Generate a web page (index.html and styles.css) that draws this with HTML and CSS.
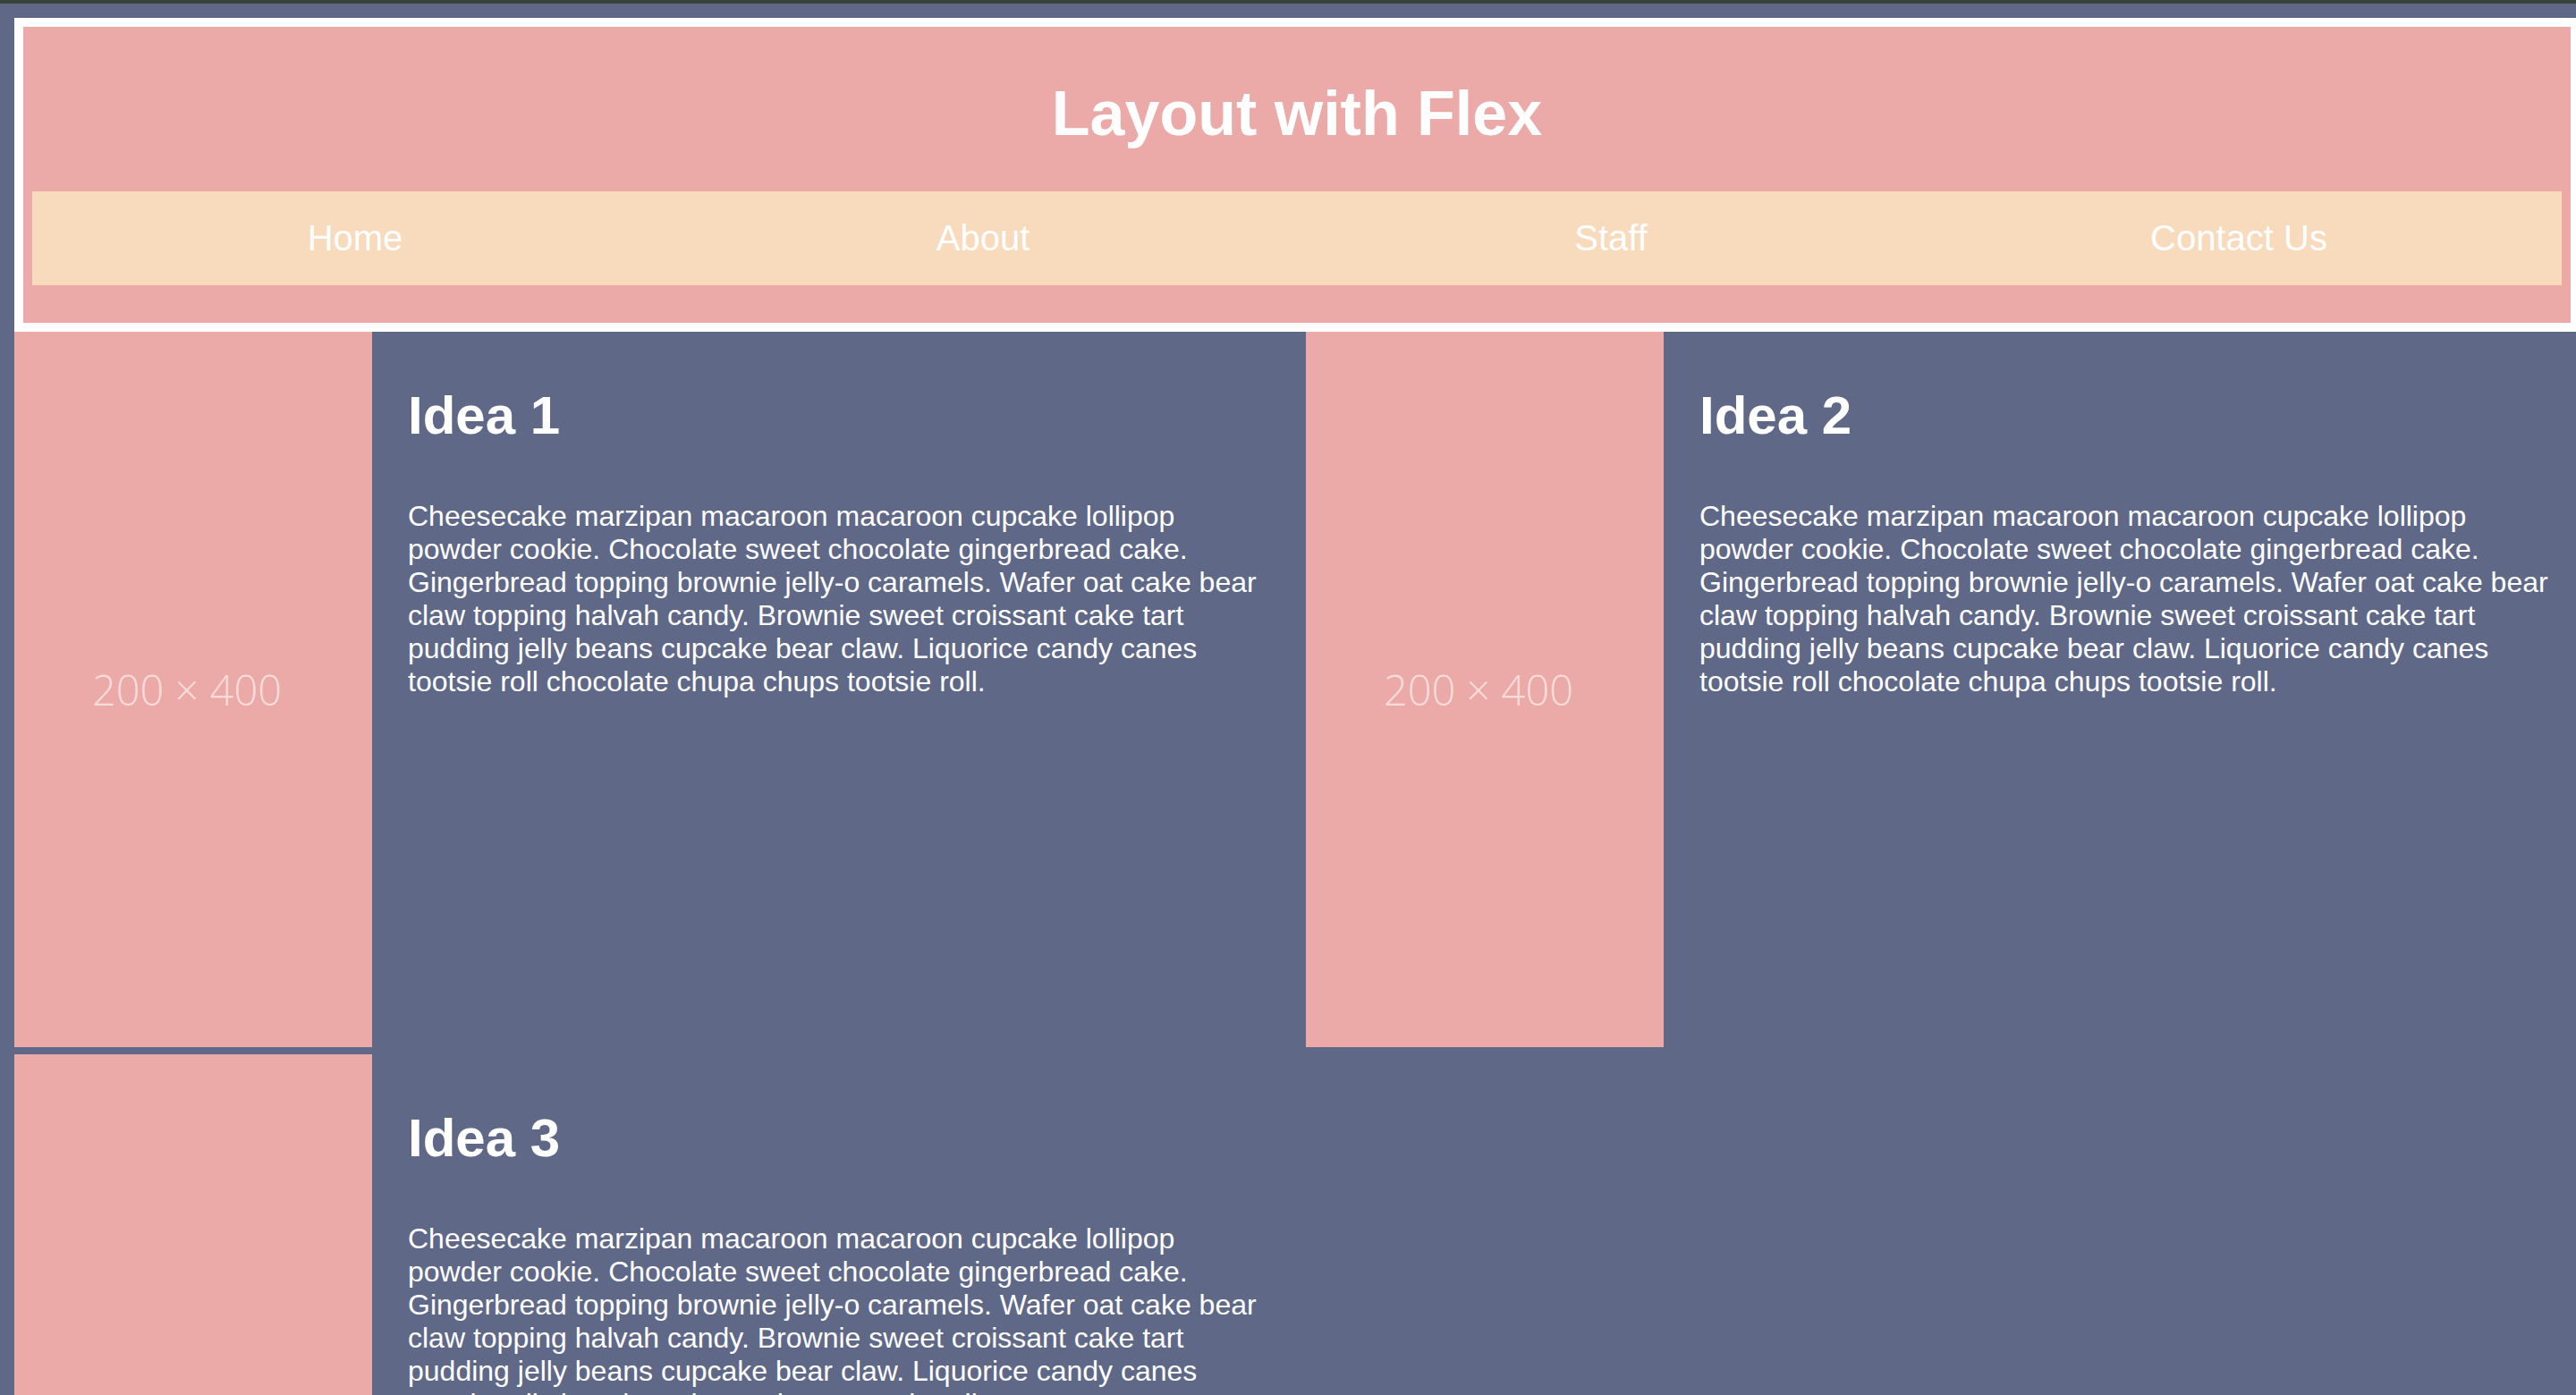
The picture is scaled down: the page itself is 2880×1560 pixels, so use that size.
FILE: index.html
```html
<!DOCTYPE html>
<html lang="en">
<head>
<meta charset="utf-8">
<title>Layout with Flex</title>
<link rel="stylesheet" href="styles.css">
</head>
<body>
<div class="topbar"></div>
<div class="page">
  <header class="site-header">
    <h1 class="title">Layout with Flex</h1>
    <ul class="nav">
      <li class="nav-item"><a href="#">Home</a></li>
      <li class="nav-item"><a href="#">About</a></li>
      <li class="nav-item"><a href="#">Staff</a></li>
      <li class="nav-item"><a href="#">Contact Us</a></li>
    </ul>
  </header>
  <main class="cards">
    <article class="card">
      <div class="thumb"><span>200 × 400</span></div>
      <div class="card-body">
        <h2 class="card-title">Idea 1</h2>
        <p class="card-text">Cheesecake marzipan macaroon macaroon cupcake lollipop powder cookie. Chocolate sweet chocolate gingerbread cake. Gingerbread topping brownie jelly-o caramels. Wafer oat cake bear claw topping halvah candy. Brownie sweet croissant cake tart pudding jelly beans cupcake bear claw. Liquorice candy canes tootsie roll chocolate chupa chups tootsie roll.</p>
      </div>
    </article>
    <article class="card">
      <div class="thumb"><span>200 × 400</span></div>
      <div class="card-body">
        <h2 class="card-title">Idea 2</h2>
        <p class="card-text">Cheesecake marzipan macaroon macaroon cupcake lollipop powder cookie. Chocolate sweet chocolate gingerbread cake. Gingerbread topping brownie jelly-o caramels. Wafer oat cake bear claw topping halvah candy. Brownie sweet croissant cake tart pudding jelly beans cupcake bear claw. Liquorice candy canes tootsie roll chocolate chupa chups tootsie roll.</p>
      </div>
    </article>
    <article class="card">
      <div class="thumb"><span>200 × 400</span></div>
      <div class="card-body">
        <h2 class="card-title">Idea 3</h2>
        <p class="card-text">Cheesecake marzipan macaroon macaroon cupcake lollipop powder cookie. Chocolate sweet chocolate gingerbread cake. Gingerbread topping brownie jelly-o caramels. Wafer oat cake bear claw topping halvah candy. Brownie sweet croissant cake tart pudding jelly beans cupcake bear claw. Liquorice candy canes tootsie roll chocolate chupa chups tootsie roll.</p>
      </div>
    </article>
  </main>
</div>
</body>
</html>
```
FILE: styles.css
```css
html, body {
  overflow-x: hidden;
}
body {
  margin: 0;
  background: #5f6887;
  color: #ffffff;
  font-family: "Liberation Sans", Arial, sans-serif;
  font-size: 32px;
}
.topbar {
  height: 4px;
  background: #384239;
}
.page {
  margin: 16px 16px 0 16px;
}
.site-header {
  width: calc(100% - 20px);
  border: 10px solid #ffffff;
  padding: 10px;
  background: #eba9a7;
}
.title {
  margin: 47px 0;
  font-size: 70px;
  line-height: 80px;
  font-weight: bold;
  text-align: center;
}
.nav {
  display: flex;
  margin: 0 0 32px 0;
  padding: 0 10px;
  list-style: none;
  background: #f8dbbc;
}
.nav-item {
  flex: 1;
  text-align: center;
  padding: 30px 0;
  font-size: 40px;
  line-height: 45px;
}
.nav-item a {
  color: #ffffff;
  text-decoration: none;
}
.cards {
  display: flex;
  flex-wrap: wrap;
  width: 2888px;
}
.card {
  display: flex;
  align-items: flex-start;
  width: 1444px;
}
.thumb {
  flex: 0 0 400px;
  height: 800px;
  margin-bottom: 8px;
  padding-right: 14px;
  box-sizing: border-box;
  background: #eba9a7;
  display: flex;
  align-items: center;
  justify-content: center;
}
.thumb span {
  font-family: "Open Sans", "Noto Sans", sans-serif;
  font-weight: 300;
  font-size: 47px;
  color: rgba(255, 255, 255, 0.62);
}
.card-body {
  flex: 1;
  padding: 0 44px 0 40px;
}
.card-title {
  margin: 58px 0 58px 0;
  font-size: 60px;
  line-height: 72px;
  font-weight: bold;
}
.card-text {
  margin: 0;
  font-size: 32px;
  line-height: normal;
}
```
